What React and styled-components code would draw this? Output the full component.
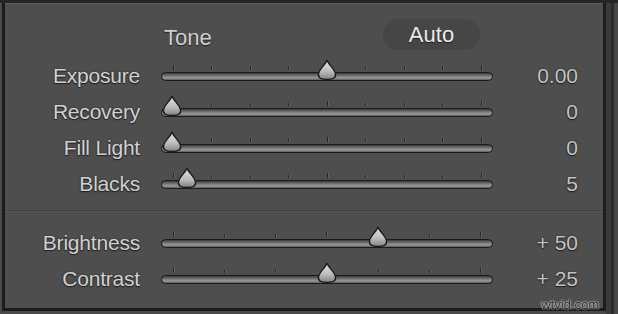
import styled, { createGlobalStyle } from "styled-components";

const GlobalStyle = createGlobalStyle`
  html, body {
    margin: 0;
    padding: 0;
    background: #474747;
  }
  body {
    width: 618px;
    height: 314px;
    overflow: hidden;
  }
`;

const Frame = styled.div`
  width: 618px;
  height: 314px;
  box-sizing: border-box;
  border-top: 3px solid #252525;
  padding-left: 2px;
  background: linear-gradient(
    to right,
    #4a4a4a 0 606px,
    #3a3a3a 606px 611px,
    #2b2b2b 611px 614px,
    #474747 614px
  );
`;

const Panel = styled.div`
  position: relative;
  width: 604px;
  height: 308px;
  box-sizing: border-box;
  background: #4e4e4e;
  border: 3px solid #1c1c1c;
  border-top: none;
  box-shadow: inset 0 1px 0 #5c5c5c;
  font-family: "Liberation Sans", Arial, sans-serif;
`;

const Row = styled.div`
  display: grid;
  grid-template-columns: 135px 332px 64px;
  column-gap: 21px;
  align-items: center;
  height: ${(p) => p.h || 36}px;
`;

const Label = styled.div`
  text-align: right;
  font-size: 21px;
  letter-spacing: -0.2px;
  color: #d2d2d2;
  text-shadow: 0 1px 1px #1e1e1e, 0 0 2px #2a2a2a;
  white-space: nowrap;
`;

const Value = styled(Label)`
  color: #c2c2c2;
  letter-spacing: 0;
`;

const Header = styled.div`
  display: flex;
  align-items: center;
  justify-content: space-between;
  padding: 8px 13px 0 3px;
`;

const Title = styled.div`
  font-size: 22px;
  color: #cfcfcf;
  margin-top: 7px;
  text-shadow: 0 1px 1px #1e1e1e;
`;

const Pill = styled.div`
  width: 97px;
  height: 31px;
  border-radius: 16px;
  background: #464646;
  color: #ececec;
  font-size: 22px;
  display: flex;
  align-items: center;
  justify-content: center;
  text-shadow: 0 1px 1px #1e1e1e;
`;

const Divider = styled.div`
  margin: 8px 0 13px;
  height: 0;
  border-top: 1px solid #3f3f3f;
  border-bottom: 1px solid #575757;
`;

const SliderBox = styled.div`
  display: flex;
  flex-direction: column;
  padding-bottom: 8px;
`;

const Ticks = styled.div`
  display: flex;
  justify-content: space-between;
  align-items: flex-end;
  height: 6px;
  padding: 0 11.5px;
  margin-bottom: 2px;
`;

const Tick = styled.span`
  width: 1px;
  height: ${(p) => (p.major ? 5 : 3)}px;
  background: #242424;
  box-shadow: 1px 0 0 #626262;
`;

const Track = styled.div`
  position: relative;
  height: 9px;
  box-sizing: border-box;
  border: 1.5px solid #1a1a1a;
  border-radius: 4.5px;
  background: linear-gradient(to bottom, #3a3a3a 0%, #747474 40%, #9a9a9a 70%, #5e5e5e 100%);
`;

const Thumb = styled.svg`
  position: absolute;
  top: -14px;
  width: 20px;
  height: 22px;
  margin-left: -10px;
`;

const Watermark = styled.div`
  position: absolute;
  right: 4px;
  bottom: -4px;
  font-family: "Liberation Sans", Arial, sans-serif;
  font-size: 13px;
  color: #151515;
  text-shadow: 0 0 2px #ffffff, 0 0 1px #ffffff;
`;

const Slider = ({ pct, ticks }) => (
  <SliderBox>
    <Ticks>
      {Array.from({ length: ticks }).map((_, i) => (
        <Tick key={i} major={i === 0 || i === ticks - 1 || i === (ticks - 1) / 2} />
      ))}
    </Ticks>
    <Track>
      <Thumb viewBox="0 0 20 22" style={{ left: 11 + pct * 310 - 1.5 }}>
        <defs>
          <linearGradient id="tg" x1="0" y1="0" x2="0" y2="1">
            <stop offset="0" stopColor="#e6e6e6" />
            <stop offset="0.6" stopColor="#bababa" />
            <stop offset="1" stopColor="#808080" />
          </linearGradient>
        </defs>
        <path
          d="M10 1 C11 5 18 10 18.5 15 C19 19 16 20.5 10 20.5 C4 20.5 1 19 1.5 15 C2 10 9 5 10 1 Z"
          fill="url(#tg)"
          stroke="#1b1b1b"
          strokeWidth="1.4"
        />
      </Thumb>
    </Track>
  </SliderBox>
);

const tone = [
  { label: "Exposure", value: "0.00", pct: 0.5 },
  { label: "Recovery", value: "0", pct: 0 },
  { label: "Fill Light", value: "0", pct: 0 },
  { label: "Blacks", value: "5", pct: 0.05 },
];

const presence = [
  { label: "Brightness", value: "+ 50", pct: 0.667 },
  { label: "Contrast", value: "+ 25", pct: 0.5 },
];

export default function App() {
  return (
    <>
      <GlobalStyle />
      <Frame>
        <Panel>
          <Row h={55}>
            <span />
            <Header>
              <Title>Tone</Title>
              <Pill>Auto</Pill>
            </Header>
          </Row>
          {tone.map((r) => (
            <Row key={r.label}>
              <Label>{r.label}</Label>
              <Slider pct={r.pct} ticks={9} />
              <Value>{r.value}</Value>
            </Row>
          ))}
          <Divider />
          {presence.map((r) => (
            <Row key={r.label}>
              <Label>{r.label}</Label>
              <Slider pct={r.pct} ticks={7} />
              <Value>{r.value}</Value>
            </Row>
          ))}
          <Watermark>wtvid.com</Watermark>
        </Panel>
      </Frame>
    </>
  );
}
